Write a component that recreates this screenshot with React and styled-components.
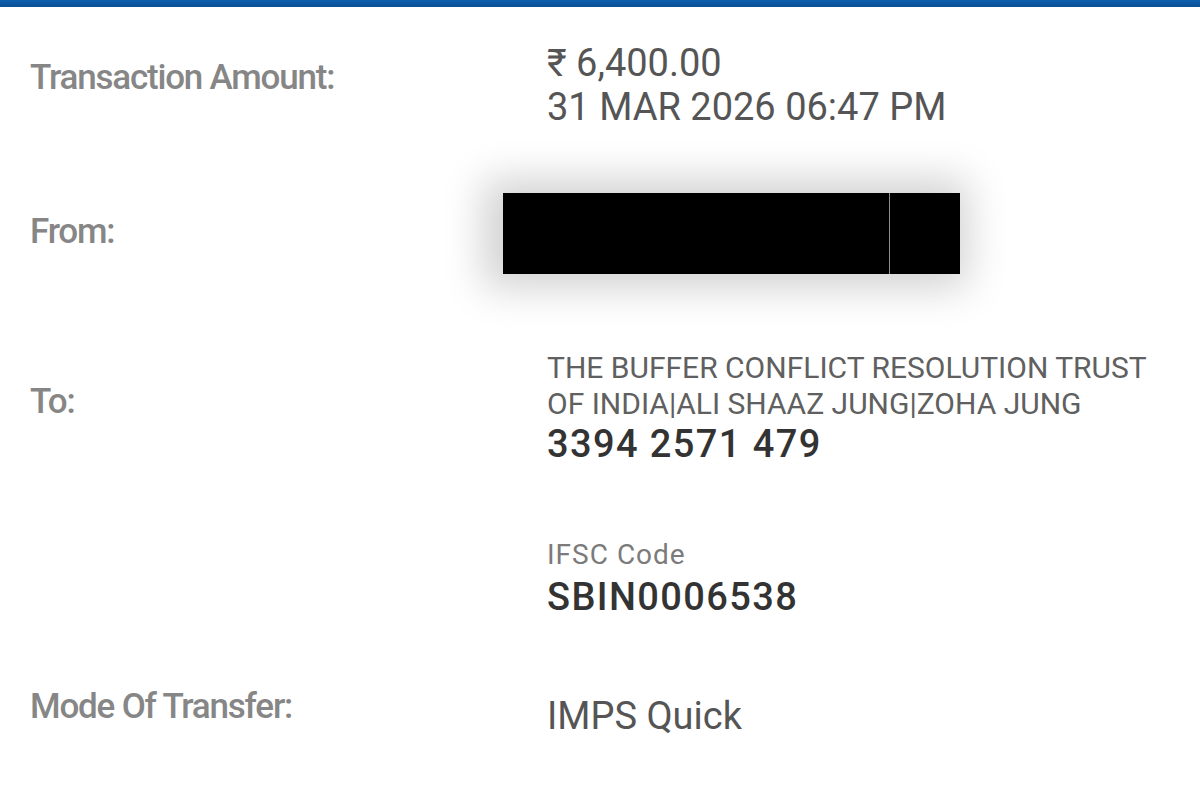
import React from 'react';
import styled, { createGlobalStyle } from 'styled-components';

const GlobalStyle = createGlobalStyle`
    html, body {
        margin: 0;
        padding: 0;
        background: #ffffff;
    }
    body {
        font-family: Roboto, "Noto Sans", "Liberation Sans", sans-serif;
    }
`;

const rows = {
    amount: '₹ 6,400.00',
    date: '31 MAR 2026 06:47 PM',
    payee: 'THE BUFFER CONFLICT RESOLUTION TRUST OF INDIA|ALI SHAAZ JUNG|ZOHA JUNG',
    account: '3394 2571 479',
    ifsc: 'SBIN0006538',
    mode: 'IMPS Quick',
};

const App = () => {
    return (
        <Page>
            <GlobalStyle />
            <TopBar />
            <Details>
                <Row top="34px">
                    <Label offset="14px">Transaction Amount:</Label>
                    <div>
                        <Value>{rows.amount}</Value>
                        <Value>{rows.date}</Value>
                    </div>
                </Row>
                <Row top="64px">
                    <Label offset="16px">From:</Label>
                    <Redacted>
                        <RedactedTail />
                    </Redacted>
                </Row>
                <Row top="76px">
                    <Label offset="29px">To:</Label>
                    <div>
                        <Payee>{rows.payee}</Payee>
                        <Strong top="2px">{rows.account}</Strong>
                    </div>
                </Row>
                <Row top="74px">
                    <span />
                    <div>
                        <SubLabel>IFSC Code</SubLabel>
                        <Strong top="5px">{rows.ifsc}</Strong>
                    </div>
                </Row>
                <Row top="67px">
                    <Label offset="0px">Mode Of Transfer:</Label>
                    <Value offset="10px">{rows.mode}</Value>
                </Row>
            </Details>
        </Page>
    );
};

const Page = styled.div`
    width: 1200px;
    height: 795px;
    overflow: hidden;
    background: #ffffff;
`;

const TopBar = styled.div`
    height: 7px;
    background: linear-gradient(#0d5fae, #0a4f96);
`;

const Details = styled.div`
    padding: 0 0 0 30px;
`;

const Row = styled.div`
    display: grid;
    grid-template-columns: 517px 1fr;
    align-items: start;
    margin-top: ${props => props.top};
`;

const Label = styled.div`
    margin-top: ${props => props.offset};
    font-size: 35px;
    line-height: 45px;
    font-weight: 500;
    letter-spacing: -1.2px;
    color: #868686;
`;

const Value = styled.div`
    margin-top: ${props => props.offset || '0'};
    font-size: 38px;
    line-height: 44px;
    color: #555555;
    white-space: nowrap;
`;

const Payee = styled.div`
    width: 620px;
    font-size: 30px;
    line-height: 36px;
    color: #606060;
`;

const Strong = styled.div`
    margin-top: ${props => props.top};
    font-size: 38px;
    line-height: 40px;
    font-weight: 500;
    letter-spacing: 1.4px;
    color: #333333;
`;

const SubLabel = styled.div`
    font-size: 28px;
    line-height: 34px;
    letter-spacing: 1px;
    color: #7b7b7b;
`;

const Redacted = styled.div`
    position: relative;
    margin-left: -44px;
    width: 457px;
    height: 81px;
    background: #000000;
    box-shadow: -6px 0 40px 14px rgba(0, 0, 0, 0.18);
`;

const RedactedTail = styled.div`
    position: absolute;
    top: 0;
    bottom: 0;
    left: 386px;
    width: 1px;
    background: rgba(255, 255, 255, 0.55);
`;

export default App;
